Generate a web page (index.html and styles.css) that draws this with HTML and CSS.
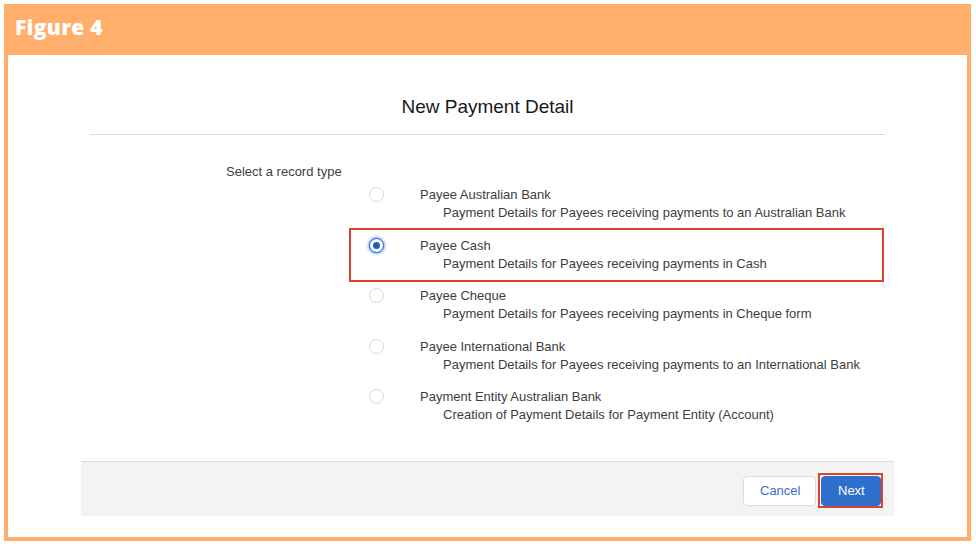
FILE: index.html
```html
<!DOCTYPE html>
<html lang="en">
<head>
  <meta charset="UTF-8" />
  <meta name="viewport" content="width=device-width, initial-scale=1.0" />
  <title>Figure 4 - New Payment Detail</title>
  <link rel="stylesheet" href="styles.css">
</head>
<body>
  <div class="figure">
    <div class="figure-title">Figure 4</div>

    <div class="modal">
      <h2 class="modal-header">New Payment Detail</h2>

      <div class="modal-body">
        <div class="legend">Select a record type</div>
        <div class="options">
          <div class="option">
            <span class="radio"></span>
            <div class="option-text">
              <div class="option-label">Payee Australian Bank</div>
              <div class="option-desc">Payment Details for Payees receiving payments to an Australian Bank</div>
            </div>
          </div>
          <div class="option highlight">
            <span class="radio checked"></span>
            <div class="option-text">
              <div class="option-label">Payee Cash</div>
              <div class="option-desc">Payment Details for Payees receiving payments in Cash</div>
            </div>
          </div>
          <div class="option">
            <span class="radio"></span>
            <div class="option-text">
              <div class="option-label">Payee Cheque</div>
              <div class="option-desc">Payment Details for Payees receiving payments in Cheque form</div>
            </div>
          </div>
          <div class="option">
            <span class="radio"></span>
            <div class="option-text">
              <div class="option-label">Payee International Bank</div>
              <div class="option-desc">Payment Details for Payees receiving payments to an International Bank</div>
            </div>
          </div>
          <div class="option">
            <span class="radio"></span>
            <div class="option-text">
              <div class="option-label">Payment Entity Australian Bank</div>
              <div class="option-desc">Creation of Payment Details for Payment Entity (Account)</div>
            </div>
          </div>
        </div>
      </div>

      <div class="modal-footer">
        <button class="btn btn-neutral">Cancel</button>
        <button class="btn btn-brand">Next</button>
      </div>
    </div>
  </div>
</body>
</html>
```

FILE: styles.css
```css
body {
  margin: 4px;
  background: #fff;
  font-family: "Liberation Sans", Arial, sans-serif;
  color: #3e3e3c;
}
.figure {
  width: 967px;
  box-sizing: border-box;
  border: 4px solid #ffaf6b;
  border-top: 0;
  background: #fff;
  padding-bottom: 21px;
}
.figure-title {
  height: 51px;
  margin: 0 -4px;
  padding: 11px 0 0 11px;
  box-sizing: border-box;
  background: #ffaf6b;
  color: #fff;
  font-family: "Open Sans", sans-serif;
  font-weight: 800;
  font-size: 21px;
  letter-spacing: 0.3px;
  line-height: 24px;
}
.modal {
  width: 813px;
  margin-left: 73px;
}
.modal-header {
  margin: 0 9px;
  padding: 40px 0 15px;
  border-bottom: 1px solid #dddbda;
  text-align: center;
  font-size: 19px;
  font-weight: 400;
  line-height: 24px;
  color: #181818;
}
.modal-body {
  display: grid;
  grid-template-columns: 268px 1fr;
  padding: 27px 10px 27px 0;
  font-size: 13px;
}
.legend {
  padding-left: 145px;
  line-height: 19px;
}
.options {
  padding-top: 19px;
}
.option {
  position: relative;
  display: flex;
  height: 50.5px;
  box-sizing: border-box;
  padding: 4px 0 0 20px;
}
.option.highlight::after {
  content: "";
  position: absolute;
  top: -4px;
  left: 0;
  right: 0;
  bottom: 0;
  border: 2px solid #db432e;
}
.radio {
  width: 15px;
  height: 15px;
  box-sizing: border-box;
  margin: 2px 36px 0 0;
  border: 1px solid #d8d8d8;
  border-radius: 50%;
  background: #fff;
  flex-shrink: 0;
}
.radio.checked {
  border-color: #1b5fc6;
  box-shadow: 0 0 3px 1px #86a9e6;
  position: relative;
}
.radio.checked::after {
  content: "";
  position: absolute;
  top: 3px;
  left: 3px;
  width: 7px;
  height: 7px;
  border-radius: 50%;
  background: #1b5fc6;
}
.option-label {
  line-height: 19px;
  color: #3e3e3c;
}
.option-desc {
  padding-left: 23px;
  line-height: 18px;
  color: #3e3e3c;
}
.modal-footer {
  display: flex;
  justify-content: flex-end;
  gap: 5px;
  height: 55px;
  box-sizing: border-box;
  padding: 14px 13px 0 0;
  background: #f3f3f3;
  border-top: 1px solid #dddbda;
}
.btn {
  height: 30px;
  padding: 0 16px;
  border-radius: 4px;
  font-family: "Liberation Sans", Arial, sans-serif;
  font-size: 13px;
}
.btn-neutral {
  width: 73px;
  background: #fff;
  border: 1px solid #dddbda;
  color: #3a6fc4;
}
.btn-brand {
  position: relative;
  width: 60px;
  background: #2f6fcc;
  border: 1px solid #2f6fcc;
  color: #fff;
}
/* annotation box around Next */
.btn-brand::after {
  content: "";
  position: absolute;
  top: -4px;
  left: -4px;
  right: -3px;
  bottom: -3px;
  border: 2px solid #db432e;
}
```
